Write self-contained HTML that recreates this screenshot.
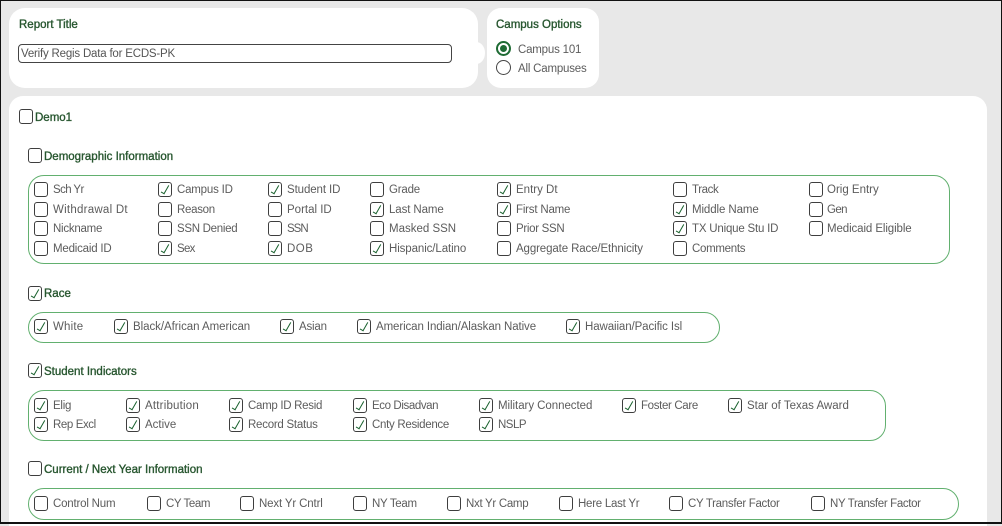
<!DOCTYPE html>
<html lang="en"><head><meta charset="utf-8"><title>Report Options</title>
<style>
html,body{margin:0;padding:0}
body{position:relative;width:1002px;height:524px;overflow:hidden;background:#e8e8e8;font-family:"Liberation Sans",sans-serif}
.frame{position:absolute;left:0;top:0;width:1000px;height:521px;border:1px solid #111;border-bottom-width:2px;z-index:9;pointer-events:none}
.p{position:absolute;background:#fff}
.g{position:absolute;box-sizing:border-box;border:1.7px solid #62b06f;border-radius:16px;background:#fff}
.b,.k{position:absolute;box-sizing:border-box;width:14px;height:15px;border:1.7px solid #3e3e3e;border-radius:3px;background:#fff}
.k::after{content:"";position:absolute;left:3.6px;top:.6px;width:3px;height:9px;border-right:1.6px solid #17602c;border-bottom:1.6px solid #17602c;transform:rotate(30deg)}
.t,.h{position:absolute;white-space:nowrap;line-height:14px;height:14px;margin-top:1px}
.t{font-size:11.5px;color:#5c5c5c;letter-spacing:-.2px}
.h{font-size:11.5px;color:#27562f;-webkit-text-stroke:.35px #27562f}
.r{position:absolute;box-sizing:border-box;width:15px;height:15px;border-radius:50%;border:1.7px solid #444;background:#fff}
.r.on{border:2px solid #1e6b34}
.r.on::after{content:"";position:absolute;left:2px;top:2px;width:7px;height:7px;border-radius:50%;background:#1e6b34}
input{position:absolute;left:18px;top:44px;width:434px;height:19px;box-sizing:border-box;border:1.7px solid #444;border-radius:4px;padding:0 0 0 2px;font:11.5px "Liberation Sans",sans-serif;letter-spacing:-.2px;color:#555;background:#fff;outline:0}
</style></head><body>
<div class="p" style="left:9px;top:8px;width:469px;height:80px;border-radius:16px"></div>
<div class="p" style="left:468px;top:42px;width:17px;height:22px;border-radius:50%"></div>
<div class="p" style="left:487px;top:8px;width:112px;height:80px;border-radius:14px"></div>
<div class="p" style="left:9px;top:96px;width:978px;height:430px;border-radius:14px 14px 0 0"></div>

<span class="h" style="left:19px;top:17px">Report Title</span>
<input type="text" value="Verify Regis Data for ECDS-PK">
<span class="h" style="left:496px;top:17px">Campus Options</span>
<i class="r on" style="left:496px;top:41px"></i><span class="t" style="left:518px;top:42px">Campus 101</span>
<i class="r" style="left:496px;top:60px"></i><span class="t" style="left:518px;top:61px">All Campuses</span>

<i class="b" style="left:19px;top:109px"></i><span class="h" style="left:35px;top:110px">Demo1</span>
<i class="b" style="left:28px;top:148px"></i><span class="h" style="left:44px;top:149px">Demographic Information</span>
<div class="g" style="left:28px;top:175px;width:922px;height:89px"></div>

<i class="b" style="left:34px;top:182px"></i><span class="t" style="left:53px;top:182px;letter-spacing:-.6px">Sch Yr</span>
<i class="k" style="left:158px;top:182px"></i><span class="t" style="left:177px;top:182px">Campus ID</span>
<i class="k" style="left:268px;top:182px"></i><span class="t" style="left:287px;top:182px;letter-spacing:-.1px">Student ID</span>
<i class="b" style="left:370px;top:182px"></i><span class="t" style="left:389px;top:182px">Grade</span>
<i class="k" style="left:497px;top:182px"></i><span class="t" style="left:516px;top:182px;letter-spacing:0">Entry Dt</span>
<i class="b" style="left:673px;top:182px"></i><span class="t" style="left:692px;top:182px;letter-spacing:-.4px">Track</span>
<i class="b" style="left:809px;top:182px"></i><span class="t" style="left:827px;top:182px;letter-spacing:0">Orig Entry</span>

<i class="b" style="left:34px;top:202px"></i><span class="t" style="left:53px;top:202px;letter-spacing:.25px">Withdrawal Dt</span>
<i class="b" style="left:158px;top:202px"></i><span class="t" style="left:177px;top:202px;letter-spacing:-.3px">Reason</span>
<i class="b" style="left:268px;top:202px"></i><span class="t" style="left:287px;top:202px;letter-spacing:0">Portal ID</span>
<i class="k" style="left:370px;top:202px"></i><span class="t" style="left:389px;top:202px;letter-spacing:-.1px">Last Name</span>
<i class="k" style="left:497px;top:202px"></i><span class="t" style="left:516px;top:202px">First Name</span>
<i class="k" style="left:673px;top:202px"></i><span class="t" style="left:692px;top:202px;letter-spacing:-.1px">Middle Name</span>
<i class="b" style="left:809px;top:202px"></i><span class="t" style="left:827px;top:202px;letter-spacing:-.6px">Gen</span>

<i class="b" style="left:34px;top:221px"></i><span class="t" style="left:53px;top:221px;letter-spacing:-.25px">Nickname</span>
<i class="b" style="left:158px;top:221px"></i><span class="t" style="left:177px;top:221px;letter-spacing:-.3px">SSN Denied</span>
<i class="b" style="left:268px;top:221px"></i><span class="t" style="left:287px;top:221px;letter-spacing:-1px">SSN</span>
<i class="b" style="left:370px;top:221px"></i><span class="t" style="left:389px;top:221px;letter-spacing:0">Masked SSN</span>
<i class="b" style="left:497px;top:221px"></i><span class="t" style="left:516px;top:221px;letter-spacing:-.3px">Prior SSN</span>
<i class="k" style="left:673px;top:221px"></i><span class="t" style="left:692px;top:221px">TX Unique Stu ID</span>
<i class="b" style="left:809px;top:221px"></i><span class="t" style="left:827px;top:221px;letter-spacing:-.1px">Medicaid Eligible</span>

<i class="b" style="left:34px;top:241px"></i><span class="t" style="left:53px;top:241px">Medicaid ID</span>
<i class="k" style="left:158px;top:241px"></i><span class="t" style="left:177px;top:241px;letter-spacing:-.7px">Sex</span>
<i class="k" style="left:268px;top:241px"></i><span class="t" style="left:287px;top:241px;letter-spacing:.5px">DOB</span>
<i class="k" style="left:370px;top:241px"></i><span class="t" style="left:389px;top:241px;letter-spacing:-.1px">Hispanic/Latino</span>
<i class="b" style="left:497px;top:241px"></i><span class="t" style="left:516px;top:241px;letter-spacing:-.12px">Aggregate Race/Ethnicity</span>
<i class="b" style="left:673px;top:241px"></i><span class="t" style="left:692px;top:241px;letter-spacing:-.3px">Comments</span>

<i class="k" style="left:28px;top:286px"></i><span class="h" style="left:44px;top:286px">Race</span>
<div class="g" style="left:28px;top:312px;width:692px;height:31px"></div>
<i class="k" style="left:34px;top:319px"></i><span class="t" style="left:53px;top:319px;letter-spacing:.2px">White</span>
<i class="k" style="left:114px;top:319px"></i><span class="t" style="left:133px;top:319px;letter-spacing:-.05px">Black/African American</span>
<i class="k" style="left:280px;top:319px"></i><span class="t" style="left:299px;top:319px">Asian</span>
<i class="k" style="left:357px;top:319px"></i><span class="t" style="left:376px;top:319px;letter-spacing:-.1px">American Indian/Alaskan Native</span>
<i class="k" style="left:566px;top:319px"></i><span class="t" style="left:585px;top:319px;letter-spacing:-.1px">Hawaiian/Pacific Isl</span>

<i class="k" style="left:28px;top:363px"></i><span class="h" style="left:44px;top:364px">Student Indicators</span>
<div class="g" style="left:28px;top:390px;width:858px;height:51px"></div>
<i class="k" style="left:34px;top:398px"></i><span class="t" style="left:53px;top:398px;letter-spacing:-.25px">Elig</span>
<i class="k" style="left:126px;top:398px"></i><span class="t" style="left:145px;top:398px;letter-spacing:.2px">Attribution</span>
<i class="k" style="left:229px;top:398px"></i><span class="t" style="left:248px;top:398px;letter-spacing:-.3px">Camp ID Resid</span>
<i class="k" style="left:353px;top:398px"></i><span class="t" style="left:372px;top:398px;letter-spacing:-.4px">Eco Disadvan</span>
<i class="k" style="left:479px;top:398px"></i><span class="t" style="left:498px;top:398px;letter-spacing:-.05px">Military Connected</span>
<i class="k" style="left:622px;top:398px"></i><span class="t" style="left:641px;top:398px;letter-spacing:-.35px">Foster Care</span>
<i class="k" style="left:728px;top:398px"></i><span class="t" style="left:747px;top:398px;letter-spacing:0">Star of Texas Award</span>
<i class="k" style="left:34px;top:417px"></i><span class="t" style="left:53px;top:417px;letter-spacing:-.4px">Rep Excl</span>
<i class="k" style="left:126px;top:417px"></i><span class="t" style="left:145px;top:417px;letter-spacing:0">Active</span>
<i class="k" style="left:229px;top:417px"></i><span class="t" style="left:248px;top:417px;letter-spacing:-.25px">Record Status</span>
<i class="k" style="left:353px;top:417px"></i><span class="t" style="left:372px;top:417px;letter-spacing:-.3px">Cnty Residence</span>
<i class="k" style="left:479px;top:417px"></i><span class="t" style="left:498px;top:417px;letter-spacing:-.5px">NSLP</span>

<i class="b" style="left:28px;top:461px"></i><span class="h" style="left:44px;top:462px">Current / Next Year Information</span>
<div class="g" style="left:28px;top:488px;width:931px;height:32px"></div>
<i class="b" style="left:34px;top:496px"></i><span class="t" style="left:53px;top:496px">Control Num</span>
<i class="b" style="left:147px;top:496px"></i><span class="t" style="left:166px;top:496px;letter-spacing:-.4px">CY Team</span>
<i class="b" style="left:240px;top:496px"></i><span class="t" style="left:259px;top:496px;letter-spacing:-.15px">Next Yr Cntrl</span>
<i class="b" style="left:353px;top:496px"></i><span class="t" style="left:372px;top:496px;letter-spacing:-.3px">NY Team</span>
<i class="b" style="left:447px;top:496px"></i><span class="t" style="left:466px;top:496px;letter-spacing:-.3px">Nxt Yr Camp</span>
<i class="b" style="left:559px;top:496px"></i><span class="t" style="left:578px;top:496px;letter-spacing:-.25px">Here Last Yr</span>
<i class="b" style="left:669px;top:496px"></i><span class="t" style="left:688px;top:496px;letter-spacing:-.3px">CY Transfer Factor</span>
<i class="b" style="left:811px;top:496px"></i><span class="t" style="left:830px;top:496px;letter-spacing:-.35px">NY Transfer Factor</span>
<div class="frame"></div>
</body></html>
